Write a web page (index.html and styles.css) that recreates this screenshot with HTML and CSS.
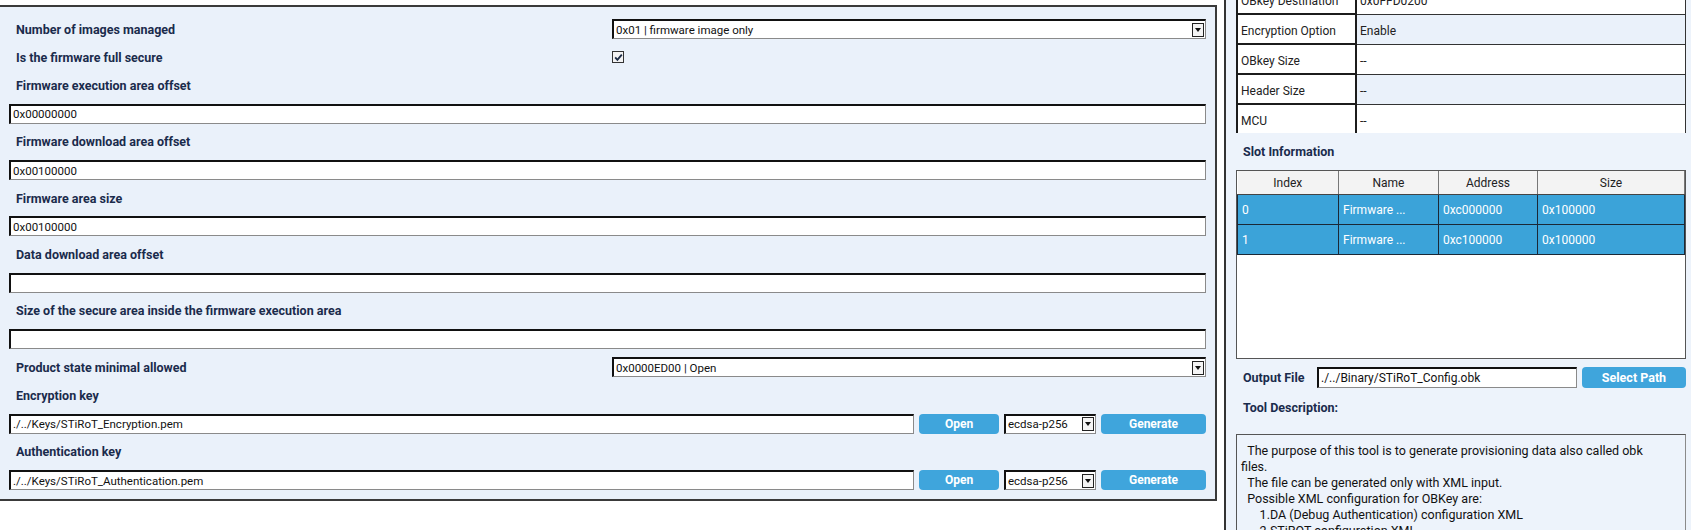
FILE: index.html
```html
<!DOCTYPE html>
<html lang="en">
<head>
    <meta charset="UTF-8">
    <meta name="viewport" content="width=device-width, initial-scale=1.0">
    <title>OBKey Provisioning</title>
    <link rel="stylesheet" href="styles.css">
</head>
<body>
    <div class="config-panel">
        <div class="row">
            <label>Number of images managed</label>
            <div class="field select control"><span>0x01 | firmware image only</span><i class="arrow"></i></div>
        </div>
        <div class="row">
            <label>Is the firmware full secure</label>
            <div class="control">
                <span class="checkbox">
                    <svg width="9" height="9" viewBox="0 0 9 9"><path d="M1.2 4.3 L3.4 6.9 L7.8 1.6" fill="none" stroke="#1c2b45" stroke-width="1.8"/></svg>
                </span>
            </div>
        </div>
        <div class="row"><label>Firmware execution area offset</label></div>
        <div class="row"><input class="field" type="text" value="0x00000000"></div>
        <div class="row"><label>Firmware download area offset</label></div>
        <div class="row"><input class="field" type="text" value="0x00100000"></div>
        <div class="row"><label>Firmware area size</label></div>
        <div class="row"><input class="field" type="text" value="0x00100000"></div>
        <div class="row"><label>Data download area offset</label></div>
        <div class="row"><input class="field" type="text" value=""></div>
        <div class="row"><label>Size of the secure area inside the firmware execution area</label></div>
        <div class="row"><input class="field" type="text" value=""></div>
        <div class="row">
            <label>Product state minimal allowed</label>
            <div class="field select control"><span>0x0000ED00 | Open</span><i class="arrow"></i></div>
        </div>
        <div class="row"><label>Encryption key</label></div>
        <div class="row key-row">
            <input class="field path" type="text" value="./../Keys/STiRoT_Encryption.pem">
            <button class="btn open">Open</button>
            <div class="field select combo"><span>ecdsa-p256</span><i class="arrow"></i></div>
            <button class="btn generate">Generate</button>
        </div>
        <div class="row"><label>Authentication key</label></div>
        <div class="row key-row">
            <input class="field path" type="text" value="./../Keys/STiRoT_Authentication.pem">
            <button class="btn open">Open</button>
            <div class="field select combo"><span>ecdsa-p256</span><i class="arrow"></i></div>
            <button class="btn generate">Generate</button>
        </div>
    </div>

    <div class="splitter"></div>

    <div class="side-panel">
        <div class="info-scroll">
            <table class="info-table">
                <tr><th>OBkey Destination</th><td>0x0FFD0200</td></tr>
                <tr><th>Encryption Option</th><td>Enable</td></tr>
                <tr><th>OBkey Size</th><td>--</td></tr>
                <tr><th>Header Size</th><td>--</td></tr>
                <tr><th>MCU</th><td>--</td></tr>
            </table>
        </div>

        <h4 class="section-title">Slot Information</h4>
        <div class="slot-box">
            <table class="slot-table">
                <colgroup>
                    <col class="col-index">
                    <col class="col-name">
                    <col class="col-address">
                    <col>
                </colgroup>
                <tr><th>Index</th><th>Name</th><th>Address</th><th>Size</th></tr>
                <tr><td>0</td><td>Firmware ...</td><td>0xc000000</td><td>0x100000</td></tr>
                <tr><td>1</td><td>Firmware ...</td><td>0xc100000</td><td>0x100000</td></tr>
            </table>
        </div>

        <div class="output-row">
            <label>Output File</label>
            <input class="field output" type="text" value="./../Binary/STiRoT_Config.obk">
            <button class="btn select-path">Select Path</button>
        </div>

        <h4 class="section-title tool-title">Tool Description:</h4>
        <div class="description">  The purpose of this tool is to generate provisioning data also called obk files.
  The file can be generated only with XML input.
  Possible XML configuration for OBKey are:
      1.DA (Debug Authentication) configuration XML
      2.STiROT configuration XML</div>
    </div>
</body>
</html>
```

FILE: styles.css
```css
body {
    margin: 0;
    height: 530px;
    overflow: hidden;
    display: flex;
    align-items: flex-start;
    background-color: white;
    font-family: Roboto, "Liberation Sans", sans-serif;
    color: #222;
}

/* left form */
.config-panel {
    box-sizing: border-box;
    width: 1217px;
    margin-top: 5px;
    padding: 8px 9px 5px 9px;
    background-color: #eaf1fa;
    border: 2px solid #3a3a3a;
    border-left: none;
}
.row {
    display: flex;
    align-items: center;
    height: 28.2px;
}
.row label {
    flex: 1;
    padding-left: 7px;
    font-size: 12.5px;
    font-weight: 700;
    color: #1a2b4c;
}
.field {
    box-sizing: border-box;
    height: 20px;
    margin: 0;
    padding: 0 2px;
    background-color: white;
    border-top: 2px solid #111;
    border-left: 2px solid #111;
    border-right: 1px solid #8a8a8a;
    border-bottom: 1px solid #8a8a8a;
    font-family: Roboto, "Liberation Sans", sans-serif;
    font-size: 11.5px;
    color: #111;
}
input.field {
    width: 100%;
    outline: none;
}
.control {
    width: 594px;
}
.select {
    display: flex;
    align-items: center;
    justify-content: space-between;
    padding-right: 1px;
}
.arrow {
    box-sizing: border-box;
    width: 12px;
    height: 14px;
    border: 1px solid #222;
    background-color: #f4f4f4;
    display: flex;
    align-items: center;
    justify-content: center;
}
.arrow::before {
    content: "";
    border-left: 3px solid transparent;
    border-right: 3px solid transparent;
    border-top: 4px solid #111;
}
.checkbox {
    box-sizing: border-box;
    width: 12px;
    height: 12px;
    border: 1px solid #333;
    background-color: #f3f3f3;
    display: flex;
    align-items: center;
    justify-content: center;
}
.key-row {
    gap: 5px;
}
.key-row .path {
    flex: 1;
}
.btn {
    box-sizing: border-box;
    height: 20px;
    border: none;
    border-radius: 4px;
    background-color: #3fa5dc;
    color: white;
    font-family: Roboto, "Liberation Sans", sans-serif;
    font-size: 12px;
    font-weight: 700;
    padding: 0;
}
.btn.open {
    width: 80px;
}
.combo {
    width: 92px;
}
.btn.generate {
    width: 105px;
}

/* divider between the two panes */
.splitter {
    width: 2px;
    height: 530px;
    margin-left: 7px;
    background-color: #333;
}

/* right pane */
.side-panel {
    box-sizing: border-box;
    flex: 1;
    height: 530px;
    padding: 0 5px 0 10px;
    background-color: #edf3fb;
    overflow: hidden;
}
.info-scroll {
    height: 133px;
    overflow: hidden;
}
.info-table {
    width: 100%;
    margin-top: -15px;
    border-collapse: separate;
    border-spacing: 0;
    table-layout: fixed;
    font-size: 12px;
    color: #222;
}
.info-table th,
.info-table td {
    height: 30px;
    box-sizing: border-box;
    padding: 3px 3px 0 3px;
    text-align: left;
    font-weight: 400;
}
.info-table th {
    width: 121px;
    background-color: white;
    border-left: 2px solid #1c1c1c;
    border-right: 2px solid #1c1c1c;
    border-bottom: 2px solid #1c1c1c;
}
.info-table td {
    background-color: white;
    border-right: 1px solid #333;
    border-bottom: 1px solid #333;
}
.info-table tr:nth-child(even) td {
    background-color: #eaf1fa;
}
.section-title {
    margin: 0;
    height: 37px;
    line-height: 37px;
    padding-left: 7px;
    font-size: 12.5px;
    font-weight: 700;
    color: #1a2b4c;
}
.slot-box {
    box-sizing: border-box;
    height: 189px;
    border: 1px solid #555;
    background-color: white;
}
.slot-table {
    width: 100%;
    border-collapse: collapse;
    table-layout: fixed;
    font-size: 12px;
}
.col-index { width: 101px; }
.col-name { width: 100px; }
.col-address { width: 99px; }
.slot-table th {
    height: 23px;
    padding: 0;
    font-weight: 400;
    color: #222;
    background-color: #f3f3f3;
    border-right: 1px solid #777;
    border-bottom: 1px solid #444;
}
.slot-table td {
    height: 29px;
    padding: 0 0 0 4px;
    color: white;
    background-color: #3ba3d9;
    border: 1px solid #1b2836;
    border-top: none;
}
.output-row {
    display: flex;
    align-items: center;
    gap: 5px;
    height: 21px;
    margin-top: 8px;
}
.output-row label {
    width: 69px;
    padding-left: 7px;
    font-size: 12.5px;
    font-weight: 700;
    color: #1a2b4c;
}
.output-row .output {
    width: 260px;
    height: 21px;
    font-size: 12px;
}
.btn.select-path {
    flex: 1;
    height: 21px;
    font-size: 12.5px;
}
.tool-title {
    height: 40px;
    line-height: 40px;
    margin-bottom: 6px;
}
.description {
    box-sizing: border-box;
    height: 200px;
    padding: 8px 20px 0 4px;
    border: 1px solid #8a8a8a;
    border-top-color: #555;
    border-left-color: #555;
    background-color: #edf3fb;
    font-size: 12.5px;
    line-height: 16px;
    color: #111;
    white-space: pre-wrap;
}
```
